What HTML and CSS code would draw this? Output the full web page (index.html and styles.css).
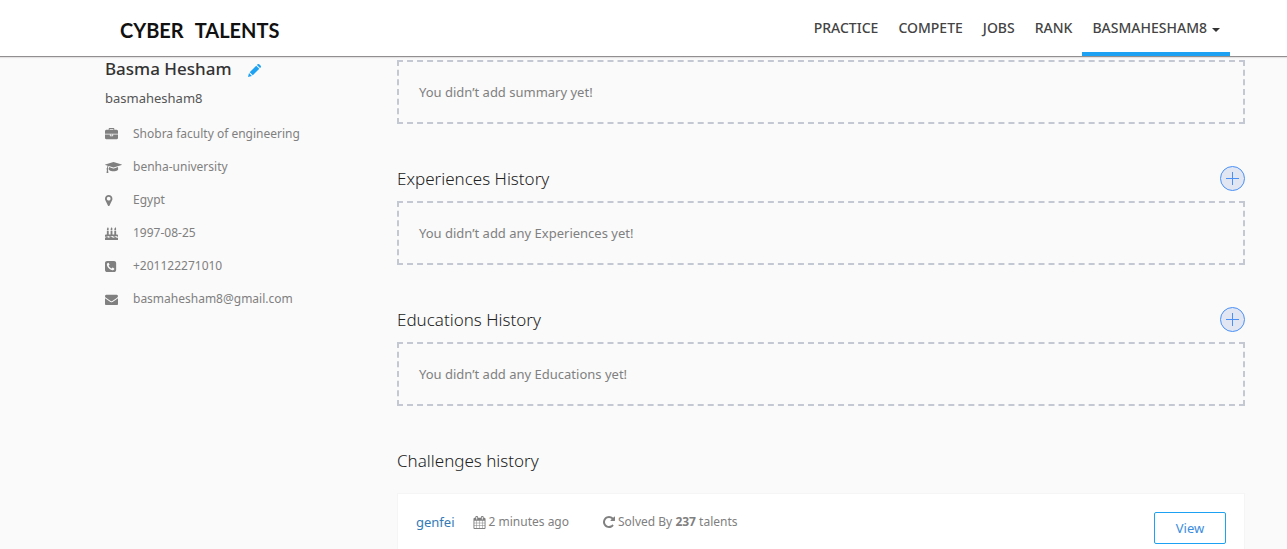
FILE: index.html
```
<!DOCTYPE html>
<html lang="en">
<head>
<meta charset="utf-8">
<title>Cyber Talents</title>
<link rel="stylesheet" href="styles.css">
</head>
<body>
<header class="topbar">
  <a class="brand" href="#"><span>CYBER</span> <span>TALENTS</span></a>
  <nav class="nav">
    <a href="#">PRACTICE</a>
    <a href="#">COMPETE</a>
    <a href="#">JOBS</a>
    <a href="#">RANK</a>
    <a class="active" href="#">BASMAHESHAM8<span class="caret"></span></a>
  </nav>
</header>
<main class="page">
  <aside class="profile">
    <div class="name-row">
      <h1 class="name">Basma Hesham</h1>
      <button class="edit" type="button" aria-label="Edit profile"><svg class="icon" viewBox="0 0 13 13"><path d="M0 13l1-4 2.900 2.900zM1.700 8.200l6.500-6.500 3.100 3.100-6.500 6.500zM8.900 1l.7-.7q.8-.6 1.600 0l1.500 1.500q.6.800 0 1.600l-.7.7z"/></svg></button>
    </div>
    <p class="username">basmahesham8</p>
    <ul class="facts">
      <li><svg class="icon" viewBox="0 0 1792 1792"><path d="M640 256h512v-128h-512v128zm1152 640v480q0 66-47 113t-113 47h-1472q-66 0-113-47t-47-113v-480h672v160q0 26 19 45t45 19h320q26 0 45-19t19-45v-160h672zm-768 0v128h-256v-128h256zm768-480v384h-1792v-384q0-66 47-113t113-47h352v-160q0-40 28-68t68-28h576q40 0 68 28t28 68v160h352q66 0 113 47t47 113z"/></svg>Shobra faculty of engineering</li>
      <li><svg class="icon wide" viewBox="0 0 2304 1792"><path d="M1774 836l18 316q4 69-82 128t-235 93.5-323 34.5-323-34.5-235-93.5-82-128l18-316 574 181q22 7 48 7t48-7zm530-324q0 23-22 31l-1120 352q-4 1-10 1t-10-1l-652-206q-43 34-71 111.5t-34 178.5q63 36 63 109 0 69-58 107l58 433q2 14-8 25-9 11-24 11h-192q-15 0-24-11-10-11-8-25l58-433q-58-38-58-107 0-73 65-111 11-207 98-330l-333-104q-22-8-22-31t22-31l1120-352q4-1 10-1t10 1l1120 352q22 8 22 31z"/></svg>benha-university</li>
      <li><svg class="icon" viewBox="384 0 1792 1792"><path d="M1152 640q0-106-75-181t-181-75-181 75-75 181 75 181 181 75 181-75 75-181zm256 0q0 109-33 179l-364 774q-16 33-47.5 52t-67.5 19-67.5-19-46.5-52l-365-774q-33-70-33-179 0-212 150-362t362-150 362 150 150 362z"/></svg>Egypt</li>
      <li><svg class="icon" viewBox="0 0 1792 1792"><path d="M0 1472q90 0 150-55t105-55 105 55 150 55 150-55 105-55 131 0 105 55 150 55 150-55 105-55 105 55 131 55h150v320H0zM0 1340v-190q0-126 126-126h130V512h256v512h256V512h256v512h256V512h256v512h130q126 0 126 126v190q-80 0-130-45t-125-45-125 45-130 45-130-45-125-45h-50q-75 0-125 45t-130 45-130-45-125-45-125 45-130 45zM384 448q-128 0-128-128 0-90 64-150t64-170q60 50 94 130t34 170q0 148-128 148zM896 448q-128 0-128-128 0-90 64-150t64-170q60 50 94 130t34 170q0 148-128 148zM1408 448q-128 0-128-128 0-90 64-150t64-170q60 50 94 130t34 170q0 148-128 148z"/></svg>1997-08-25</li>
      <li><svg class="icon" viewBox="128 0 1792 1792"><path d="M1408 1193q0-11-2-16t-18-16.5-40.5-25-47.5-26.5-45.5-25-28.5-15q-5-3-19-13t-25-15-21-5q-15 0-36.5 20.5t-39.5 45-38.5 45-33.5 20.5q-7 0-16.5-3.5t-15.5-6.5-17-9.5-14-8.5q-99-55-170-126.5t-127-170.5q-2-3-8.5-14t-9.5-17-6.5-15.5-3.5-16.5q0-13 20.5-33.5t45-38.5 45-39.5 20.5-36.5q0-10-5-21t-15-25-13-19q-3-6-15-28.5t-25-45.5-26.5-47.5-25-40.5-16.5-18-16-2q-48 0-101 22-46 21-80 94.5t-34 130.5q0 16 2.5 34t5 30.5 9 33 10 29.5 12.5 33 11 30q60 164 216.5 320.5t320.5 216.5q6 2 30 11t33 12.5 29.5 10 33 9 30.5 5 34 2.5q57 0 130.5-34t94.5-80q22-53 22-101zm256-777v960q0 119-84.5 203.5t-203.5 84.5h-960q-119 0-203.5-84.5t-84.5-203.5v-960q0-119 84.5-203.5t203.5-84.5h960q119 0 203.5 84.5t84.5 203.5z"/></svg>+201122271010</li>
      <li><svg class="icon" viewBox="0 0 1792 1792"><path d="M1792 710v794q0 66-47 113t-113 47h-1472q-66 0-113-47t-47-113v-794q44 49 101 87 362 246 497 345 57 42 92.500 65.500t94.500 48 110 24.500h2q51 0 110-24.500t94.500-48 92.500-65.500q170-123 498-345 57-39 100-87zm0-294q0 79-49 151t-122 123q-376 261-468 325-10 7-42.500 31t-54 38.500-52 32.500-57.500 27-50 9h-2q-23 0-50-9t-57.500-27-52-32.500-54-38.500-42.500-31q-91-64-262-182.500t-205-142.500q-62-42-117-115.500t-55-136.500q0-78 41.500-130t118.500-52h1472q65 0 112.500 47t47.500 113z"/></svg>basmahesham8@gmail.com</li>
    </ul>
  </aside>
  <div class="content">
    <section class="section">
      <p class="empty">You didn’t add summary yet!</p>
    </section>
    <section class="section">
      <div class="section-head">
        <h2>Experiences History</h2>
        <button class="add" type="button" aria-label="Add experience"><svg viewBox="0 0 25 25"><circle cx="12.500" cy="12.500" r="12"/><path d="M6 12.500h13M12.500 6v13"/></svg></button>
      </div>
      <p class="empty">You didn’t add any Experiences yet!</p>
    </section>
    <section class="section">
      <div class="section-head">
        <h2>Educations History</h2>
        <button class="add" type="button" aria-label="Add education"><svg viewBox="0 0 25 25"><circle cx="12.500" cy="12.500" r="12"/><path d="M6 12.500h13M12.500 6v13"/></svg></button>
      </div>
      <p class="empty">You didn’t add any Educations yet!</p>
    </section>
    <section class="section challenges">
      <div class="section-head">
        <h2>Challenges history</h2>
      </div>
      <div class="card">
        <div class="challenge">
          <a href="#">genfei</a>
          <span class="when"><svg class="icon" viewBox="64 0 1664 1792"><path d="M192 1664h288v-288h-288v288zm352 0h320v-288h-320v288zm-352-352h288v-320h-288v320zm352 0h320v-320h-320v320zm-352-384h288v-288h-288v288zm736 736h320v-288h-320v288zm-384-736h320v-288h-320v288zm768 736h288v-288h-288v288zm-384-352h320v-320h-320v320zm-352-864v-288q0-13-9.500-22.500t-22.500-9.500h-64q-13 0-22.500 9.500t-9.500 22.500v288q0 13 9.500 22.500t22.500 9.500h64q13 0 22.500-9.500t9.500-22.500zm736 864h288v-320h-288v320zm-384-384h320v-288h-320v288zm384 0h288v-288h-288v288zm32-480v-288q0-13-9.500-22.500t-22.500-9.500h-64q-13 0-22.500 9.500t-9.500 22.500v288q0 13 9.500 22.500t22.500 9.500h64q13 0 22.500-9.500t9.500-22.500zm384-64v1280q0 52-38 90t-90 38h-1408q-52 0-90-38t-38-90v-1280q0-52 38-90t90-38h128v-96q0-66 47-113t113-47h64q66 0 113 47t47 113v96h384v-96q0-66 47-113t113-47h64q66 0 113 47t47 113v96h128q52 0 90 38t38 90z"/></svg>2 minutes ago</span>
          <span class="solved"><svg class="icon" viewBox="128 128 1536 1536"><path d="M1664 256v448q0 26-19 45t-45 19h-448q-42 0-59-40-17-39 14-69l138-138q-148-137-349-137-104 0-198.500 40.500t-163.500 109.500-109.500 163.500-40.500 198.500 40.500 198.500 109.500 163.500 163.500 109.500 198.500 40.500q119 0 225-52t179-147q7-10 23-12 15 0 25 9l137 138q9 8 9.500 20.500t-7.500 22.500q-109 132-264 204.500t-327 72.500q-156 0-298-61t-245-164-164-245-61-298 61-298 164-245 245-164 298-61q147 0 284.500 55.500t244.500 156.500l130-129q29-31 70-14 39 17 39 59z"/></svg><span>Solved By <b>237</b> talents</span></span>
        </div>
        <button class="view" type="button">View</button>
      </div>
    </section>
  </div>
</main>
</body>
</html>
```
FILE: styles.css
```
* { box-sizing: border-box; }

body {
  margin: 0;
  min-height: 100vh;
  display: flex;
  flex-direction: column;
  background: #fafafa;
  color: #808080;
  font: 13px/20px "Noto Sans", "Open Sans", sans-serif;
}

h1, h2, p, ul { margin: 0; padding: 0; font-weight: 400; }
a { text-decoration: none; color: #337ab7; }
button { font: inherit; padding: 0; border: 0; background: none; cursor: pointer; }
.icon { display: block; flex: none; width: 13px; height: 13px; fill: currentColor; }

.topbar {
  display: flex;
  justify-content: space-between;
  height: 57px;
  padding: 0 57px 0 120px;
  background: #fff;
  border-bottom: 1px solid #918f8f;
  box-shadow: 0 1px 1px #e4e2e2;
}
.brand {
  display: flex;
  gap: 11px;
  font: 700 20px/60px Lato, sans-serif;
  color: #111;
}
.nav { display: flex; }
.nav a {
  display: flex;
  align-items: center;
  padding: 4px 10px 0;
  border-bottom: 4px solid transparent;
  color: #444;
  font-size: 14px;
  font-weight: 500;
}
.nav .active { border-color: #1da1f2; }
.caret {
  margin: 4px 0 0 5px;
  border: 4px solid transparent;
  border-top-color: #333;
  border-bottom: 0;
}

.page {
  flex: 1;
  display: flex;
  padding: 3px 42px 0 105px;
}
.profile { flex: 0 0 292px; }
.name-row { display: flex; align-items: center; gap: 16px; height: 20px; }
.name { font-size: 17px; line-height: 20px; padding-bottom: 2px; font-weight: 500; color: #333; }
.edit { color: #1da1f2; }
.username { margin: 8px 0 16px; color: #555; }
.facts { display: grid; gap: 13px; list-style: none; font-size: 12px; }
.facts li { display: flex; align-items: center; }
.facts .icon { margin-right: 15px; }
.facts .wide { width: 17px; margin-right: 11px; }

.content { flex: 1; display: flex; flex-direction: column; }
.section { margin-bottom: 42px; }
.section-head {
  display: flex;
  align-items: center;
  justify-content: space-between;
  height: 25px;
  margin-bottom: 10px;
}
.section-head h2 {
  font-size: 17px;
  font-weight: 300;
  line-height: 25px;
  color: #222;
}
.empty { padding: 20px; border: 2px dashed #c4c8d3; }
.add svg { display: block; width: 25px; height: 25px; fill: #e1e6f2; stroke: #4a90f7; }

.challenges { flex: 1; display: flex; flex-direction: column; margin: 0; }
.challenges .section-head { margin-bottom: 20px; }
.card {
  flex: 1;
  display: flex;
  justify-content: space-between;
  align-items: flex-start;
  padding: 18px;
  padding-bottom: 5px;
  background: #fff;
  border: 1px solid #f5f5f5;
  border-bottom: 0;
}
.challenge { display: flex; }
.when, .solved { display: flex; align-items: center; gap: 3px; font-size: 12px; }
.when { margin: 0 34px 0 18px; }
.solved .icon { width: 12px; height: 12px; }
.view {
  width: 72px;
  height: 32px;
  border: 1px solid #1da1f2;
  border-radius: 2px;
  color: #3b8de0;
}
```
